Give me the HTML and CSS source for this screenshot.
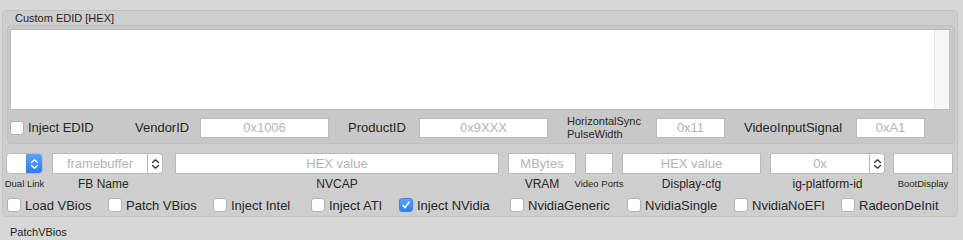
FILE: index.html
```html
<!DOCTYPE html>
<html lang="en">
<head>
    <meta charset="UTF-8">
    <title>Graphics Injector</title>
    <link rel="stylesheet" href="styles.css">
</head>
<body>
    <div class="panel">
        <div class="panel-title">Custom EDID [HEX]</div>

        <div class="edid-box">
            <div class="edid-text">
                <div class="edid-area"></div>
                <div class="edid-scroll"></div>
            </div>

            <div class="edid-row">
                <label class="check w-inject"><span class="box"></span>Inject EDID</label>
                <span class="field-label w-vendor">VendorID</span>
                <div class="input w-id">0x1006</div>
                <span class="field-label w-product">ProductID</span>
                <div class="input w-id">0x9XXX</div>
                <span class="field-label small-two w-hsync">HorizontalSync<br>PulseWidth</span>
                <div class="input w-short">0x11</div>
                <span class="field-label w-signal">VideoInputSignal</span>
                <div class="input w-short">0xA1</div>
            </div>
        </div>

        <div class="fb-row">
            <div class="col w-dual">
                <div class="popup">
                    <div class="popup-value"></div>
                    <div class="popup-step">
                        <svg width="9" height="12" viewBox="0 0 9 12"><path d="M1.5 4.5 L4.5 1.8 L7.5 4.5 M1.5 7.5 L4.5 10.2 L7.5 7.5" fill="none" stroke="#fff" stroke-width="1.4" stroke-linecap="round" stroke-linejoin="round"/></svg>
                    </div>
                </div>
                <div class="col-label tiny">Dual Link</div>
            </div>
            <div class="col w-fb">
                <div class="combo">
                    <div class="input combo-field">framebuffer</div>
                    <div class="combo-step">
                        <svg width="9" height="12" viewBox="0 0 9 12"><path d="M1.5 4.5 L4.5 1.8 L7.5 4.5 M1.5 7.5 L4.5 10.2 L7.5 7.5" fill="none" stroke="#333" stroke-width="1.2" stroke-linecap="round" stroke-linejoin="round"/></svg>
                    </div>
                </div>
                <div class="col-label fb-label">FB Name</div>
            </div>
            <div class="col w-nvcap">
                <div class="input tall">HEX value</div>
                <div class="col-label">NVCAP</div>
            </div>
            <div class="col w-vram">
                <div class="input tall">MBytes</div>
                <div class="col-label">VRAM</div>
            </div>
            <div class="col w-ports">
                <div class="input tall"></div>
                <div class="col-label tiny">Video Ports</div>
            </div>
            <div class="col w-dcfg">
                <div class="input tall">HEX value</div>
                <div class="col-label">Display-cfg</div>
            </div>
            <div class="col w-ig">
                <div class="combo">
                    <div class="input combo-field">0x</div>
                    <div class="combo-step">
                        <svg width="9" height="12" viewBox="0 0 9 12"><path d="M1.5 4.5 L4.5 1.8 L7.5 4.5 M1.5 7.5 L4.5 10.2 L7.5 7.5" fill="none" stroke="#333" stroke-width="1.2" stroke-linecap="round" stroke-linejoin="round"/></svg>
                    </div>
                </div>
                <div class="col-label">ig-platform-id</div>
            </div>
            <div class="col w-boot">
                <div class="input tall"></div>
                <div class="col-label tiny">BootDisplay</div>
            </div>
        </div>

        <div class="check-row">
            <label class="check c-load"><span class="box"></span>Load VBios</label>
            <label class="check c-patch"><span class="box"></span>Patch VBios</label>
            <label class="check c-intel"><span class="box"></span>Inject Intel</label>
            <label class="check c-ati"><span class="box"></span>Inject ATI</label>
            <label class="check c-nvidia"><span class="box checked">
                <svg width="10" height="10" viewBox="0 0 10 10"><path d="M2 5.4 L4.1 7.6 L8 2.2" fill="none" stroke="#fff" stroke-width="1.6" stroke-linecap="round" stroke-linejoin="round"/></svg>
            </span>Inject NVidia</label>
            <label class="check c-generic"><span class="box"></span>NvidiaGeneric</label>
            <label class="check c-single"><span class="box"></span>NvidiaSingle</label>
            <label class="check c-noefi"><span class="box"></span>NvidiaNoEFI</label>
            <label class="check"><span class="box"></span>RadeonDeInit</label>
        </div>
    </div>

    <div class="footer-title">PatchVBios</div>
</body>
</html>
```

FILE: styles.css
```css
body {
    margin: 0;
    background: #d7d7d7;
    font-family: 'Liberation Sans', Arial, sans-serif;
    color: #262626;
    width: 963px;
    height: 240px;
    overflow: hidden;
}

.panel {
    margin: 10px 0 0 2px;
    width: 954px;
    height: 205px;
    background: #cecece;
    border: 1px solid #c2c2c2;
    border-radius: 5px;
}

.panel-title {
    height: 14px;
    line-height: 14px;
    font-size: 11px;
    padding-left: 12px;
    color: #1e1e1e;
}

/* EDID group */
.edid-box {
    margin-left: 4px;
    width: 946px;
    height: 114px;
    background: #c8c8c8;
    border: 1px solid #c0c0c0;
    border-radius: 4px;
    padding-top: 3px;
}

.edid-text {
    display: flex;
    margin-left: 2px;
    width: 940px;
    height: 81px;
    border: 1px solid #bcbcbc;
    box-sizing: border-box;
}

.edid-area {
    flex: 1;
    background: #fff;
}

.edid-scroll {
    width: 14px;
    background: #f6f6f6;
    border-left: 1px solid #ebebeb;
}

.edid-row {
    display: flex;
    align-items: center;
    margin-top: 7px;
    padding-left: 2px;
    height: 21px;
}

.field-label {
    font-size: 13px;
    white-space: nowrap;
}

.small-two {
    font-size: 11px;
    line-height: 13px;
}

.w-inject { width: 125px; }
.w-vendor { width: 65px; }
.w-product { width: 71px; }
.w-hsync { width: 89px; }
.w-signal { width: 112px; }

.input {
    height: 20px;
    background: #fff;
    border: 1px solid #b9b9b9;
    box-sizing: border-box;
    font-size: 13px;
    line-height: 18px;
    color: #b5b5b5;
    text-align: center;
    white-space: nowrap;
    overflow: hidden;
}

.input.w-id {
    width: 129px;
    margin-right: 19px;
}

.input.w-short {
    width: 69px;
    margin-right: 19px;
}

/* checkbox */
.check {
    display: flex;
    align-items: center;
    font-size: 13px;
    white-space: nowrap;
}

.box {
    width: 14px;
    height: 14px;
    box-sizing: border-box;
    background: #fff;
    border: 1px solid #b3b3b3;
    border-radius: 3px;
    margin-right: 4px;
    display: flex;
    align-items: center;
    justify-content: center;
    flex-shrink: 0;
}

.box.checked {
    background: linear-gradient(#5ba5fb, #2f7ef2);
    border-color: #3b82ef;
}

/* framebuffer row */
.fb-row {
    display: flex;
    margin-top: 9px;
    padding-left: 3px;
}

.col {
    display: flex;
    flex-direction: column;
    align-items: center;
    flex-shrink: 0;
}

.col .input.tall {
    width: 100%;
    height: 21px;
    line-height: 19px;
}

.col-label {
    margin-top: 3px;
    height: 14px;
    line-height: 14px;
    font-size: 12px;
    white-space: nowrap;
}

.col-label.tiny {
    font-size: 9.5px;
}

.fb-label {
    align-self: flex-start;
    margin-left: 26px;
}

.w-dual { width: 37px; margin-right: 9px; }
.w-fb { width: 111px; margin-right: 12px; }
.w-nvcap { width: 324px; margin-right: 9px; }
.w-vram { width: 68px; margin-right: 9px; }
.w-ports { width: 28px; margin-right: 9px; }
.w-dcfg { width: 139px; margin-right: 9px; }
.w-ig { width: 115px; margin-right: 8px; }
.w-boot { width: 60px; }

.popup {
    display: flex;
    width: 100%;
    height: 21px;
    border-radius: 4px;
    border: 1px solid #bdbdbd;
    box-sizing: border-box;
    overflow: hidden;
    background: #fff;
}

.popup-value {
    flex: 1;
}

.popup-step {
    width: 16px;
    background: linear-gradient(#5aa4fb, #2e7cf0);
    display: flex;
    align-items: center;
    justify-content: center;
}

.combo {
    display: flex;
    width: 100%;
    height: 21px;
}

.combo-field {
    flex: 1;
    height: 21px;
    line-height: 19px;
}

.combo-step {
    width: 15px;
    height: 21px;
    box-sizing: border-box;
    background: #fff;
    border: 1px solid #b9b9b9;
    border-left: none;
    border-radius: 0 4px 4px 0;
    display: flex;
    align-items: center;
    justify-content: center;
}

/* checkbox row */
.check-row {
    display: flex;
    align-items: center;
    margin-top: 6px;
    padding-left: 4px;
    height: 16px;
}

.c-load { width: 101px; }
.c-patch { width: 105px; }
.c-intel { width: 98px; }
.c-ati { width: 88px; }
.c-nvidia { width: 111px; }
.c-generic { width: 117px; }
.c-single { width: 107px; }
.c-noefi { width: 107px; }

.footer-title {
    margin: 8px 0 0 10px;
    font-size: 11px;
    line-height: 14px;
    color: #1e1e1e;
}
```
